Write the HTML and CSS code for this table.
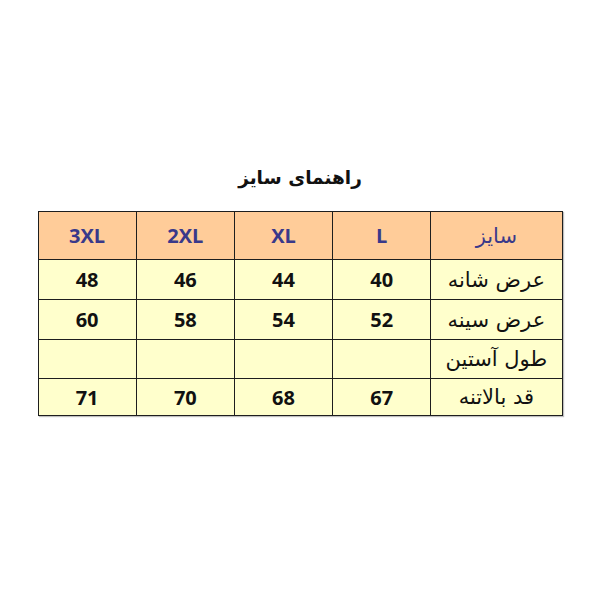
FILE: index.html
```html
<!DOCTYPE html>
<html lang="fa">
<head>
<meta charset="utf-8">
<link rel="stylesheet" href="styles.css">
</head>
<body>
<div class="page">
  <h1 class="title" dir="rtl">راهنمای سایز</h1>
  <table class="sizes" dir="rtl">
    <colgroup>
      <col class="c-label"><col class="c-num"><col class="c-num"><col class="c-num"><col class="c-num">
    </colgroup>
    <tr class="head">
      <td class="label">سایز</td><td>L</td><td>XL</td><td>2XL</td><td>3XL</td>
    </tr>
    <tr class="r1">
      <td class="label">عرض شانه</td><td>40</td><td>44</td><td>46</td><td>48</td>
    </tr>
    <tr class="r2">
      <td class="label">عرض سینه</td><td>52</td><td>54</td><td>58</td><td>60</td>
    </tr>
    <tr class="r3">
      <td class="label">طول آستین</td><td></td><td></td><td></td><td></td>
    </tr>
    <tr class="r4">
      <td class="label">قد بالاتنه</td><td>67</td><td>68</td><td>70</td><td>71</td>
    </tr>
  </table>
</div>
</body>
</html>
```
FILE: styles.css
```css
html, body {
  margin: 0;
  padding: 0;
  background: #ffffff;
}
.page {
  width: 600px;
  height: 600px;
  display: flex;
  flex-direction: column;
  align-items: center;
  padding-top: 164px;
  box-sizing: border-box;
}
.title {
  margin: 0 0 19px 0;
  font-family: "DejaVu Sans", sans-serif;
  font-weight: bold;
  font-size: 18.5px;
  line-height: 28px;
  color: #111111;
}
.sizes {
  border-collapse: collapse;
  width: 525px;
  table-layout: fixed;
  font-family: "Open Sans", "DejaVu Sans", sans-serif;
  box-shadow: 1px 1px 1px rgba(0,0,0,0.25);
}
.c-label { width: 131px; }
.c-num { width: 98px; }
.sizes td {
  border: 1px solid #1e1e1e;
  background: #ffffcc;
  text-align: center;
  vertical-align: middle;
  padding: 0;
  font-weight: bold;
  font-size: 20px;
  color: #111111;
}
.sizes td.label {
  font-family: "DejaVu Sans", sans-serif;
  font-weight: normal;
  font-size: 21px;
}
.head td {
  background: #ffcc99;
  color: #39398a;
  height: 47px;
  font-size: 20px;
}
.head td.label { color: #39398a; }
.r1 td { height: 39px; }
.r2 td { height: 39px; }
.r3 td { height: 38px; }
.r4 td { height: 36px; }
```
